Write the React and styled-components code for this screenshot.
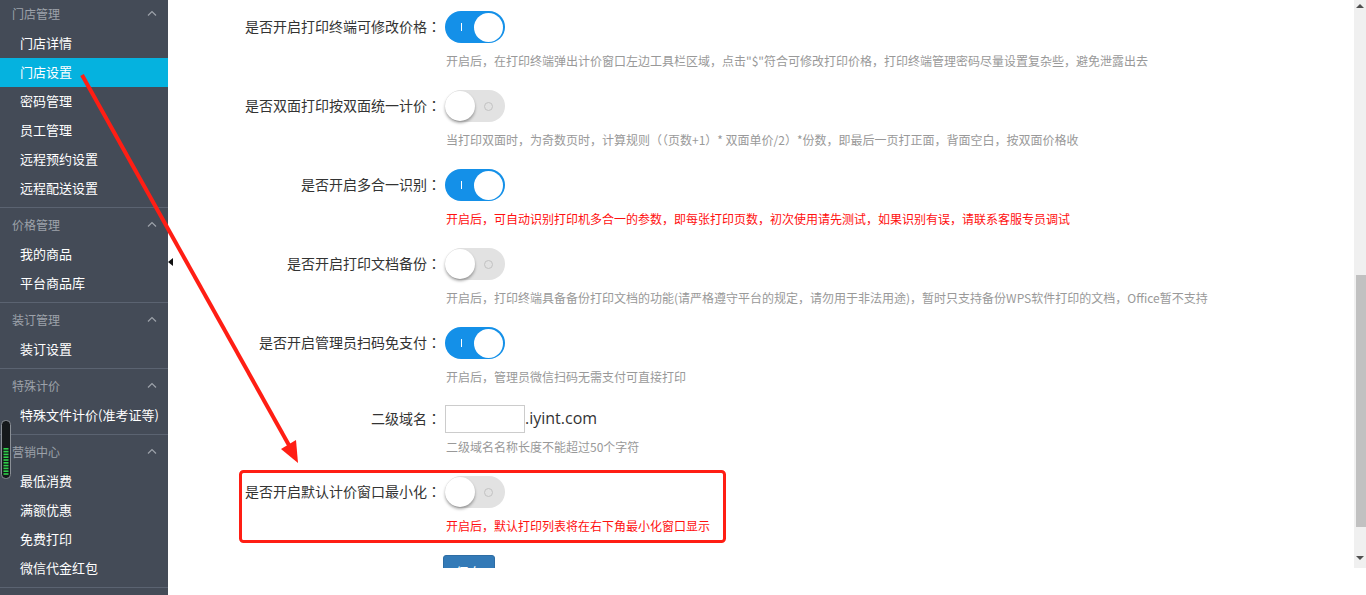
import React from 'react';
import styled, { createGlobalStyle } from 'styled-components';

const GlobalStyle = createGlobalStyle`
  html, body { margin: 0; padding: 0; background: #fff; }
  body { font-family: "Noto Sans CJK SC", "Noto Sans", sans-serif; }
  * { box-sizing: border-box; }
`;

const Page = styled.div`
  display: flex;
  height: 595px;
  position: relative;
  overflow: hidden;
`;

const Sidebar = styled.nav`
  width: 168px;
  flex: none;
  background: #444b57;
  overflow: hidden;
`;

const SideList = styled.div`
  margin-top: -3px;
`;

const SideGroup = styled.div`
  padding-bottom: 4px;
  border-bottom: 1px solid #5b6371;
`;

const GroupHeader = styled.div`
  height: 32px;
  display: flex;
  align-items: center;
  justify-content: space-between;
  padding: 0 11px 0 12px;
  font-size: 12px;
  color: #9da2aa;
`;

const SideItem = styled.div`
  height: 29px;
  line-height: 27px;
  padding-left: 20px;
  font-size: 13px;
  color: #fff;
  white-space: nowrap;
  background: ${p => (p.$active ? '#05b2df' : 'transparent')};
`;

const Main = styled.div`
  flex: 1;
  display: flex;
  flex-direction: column;
  background: #fff;
`;

const Frame = styled.div`
  height: 568px;
  display: flex;
  overflow: hidden;
`;

const Content = styled.div`
  flex: 1;
  padding-top: 11px;
  overflow: hidden;
`;

const FormGroup = styled.div`
  margin-top: ${p => p.$gap ?? 19}px;
  &:first-child { margin-top: 0; }
`;

const Row = styled.div`
  display: grid;
  grid-template-columns: 273px auto;
  column-gap: 4px;
  align-items: center;
  height: 32px;
`;

const Label = styled.label`
  text-align: right;
  font-size: 14px;
  color: #333;
  line-height: 32px;
  white-space: nowrap;
  margin-top: -3px;
`;

const Colon = styled.span`
  font-family: "Noto Sans CJK TC", "Noto Sans CJK SC", sans-serif;
`;

const Desc = styled.div`
  margin-top: ${p => p.$mt ?? 8}px;
  margin-left: 278px;
  font-size: 12px;
  line-height: 20px;
  color: ${p => (p.$red ? '#ff1010' : '#999')};
  white-space: nowrap;
`;

const Switch = styled.span`
  width: 60px;
  height: 32px;
  border-radius: 16px;
  display: flex;
  align-items: center;
  background: ${p => (p.$on ? '#1490e8' : '#e2e2e2')};
`;

const Knob = styled.span`
  width: ${p => (p.$on ? 29 : 30)}px;
  height: ${p => (p.$on ? 29 : 30)}px;
  border-radius: 50%;
  background: #fff;
  margin-left: ${p => (p.$on ? 'auto' : '0')};
  margin-right: ${p => (p.$on ? '2px' : '0')};
  box-shadow: ${p => (p.$on ? 'none' : '0 2px 3px rgba(0,0,0,0.35)')};
`;

const OnMark = styled.span`
  width: 1px;
  height: 8px;
  background: #fff;
  margin-left: 16px;
`;

const OffMark = styled.span`
  width: 9px;
  height: 9px;
  border: 1px solid #c2c2c2;
  border-radius: 50%;
  margin-left: auto;
  margin-right: 12px;
`;

const Toggle = ({ on }) => (
  <Switch $on={on}>
    {on ? <OnMark /> : null}
    <Knob $on={on} />
    {on ? null : <OffMark />}
  </Switch>
);

const DomainField = styled.div`
  display: flex;
  align-items: center;
`;

const TextInput = styled.input`
  width: 80px;
  height: 28px;
  border: 1px solid #ccc;
  padding: 0 4px;
  font-size: 14px;
  outline: none;
`;

const Suffix = styled.span`
  font-size: 16px;
  color: #333;
  font-family: "Open Sans", "Noto Sans", sans-serif;
  margin-top: -3px;
`;

const ButtonRow = styled.div`
  margin-top: 19px;
  padding-left: 275px;
`;

const SaveButton = styled.button`
  height: 34px;
  padding: 0 11px;
  background: #337ab7;
  border: 1px solid #2e6da4;
  border-radius: 3px;
  color: #fff;
  font-size: 14px;
  font-family: "Noto Sans CJK SC", sans-serif;
`;

const ScrollTrack = styled.div`
  width: 12px;
  flex: none;
  background: #f0f0f0;
  display: flex;
  flex-direction: column;
  align-items: center;
`;

const ArrowBox = styled.div`
  height: ${p => p.$h}px;
  width: 100%;
  display: flex;
  align-items: center;
  justify-content: center;
`;

const Tri = styled.span`
  width: 0;
  height: 0;
  border-left: 4px solid transparent;
  border-right: 4px solid transparent;
  ${p => (p.$up ? 'border-bottom: 4px solid #505050;' : 'border-top: 4px solid #505050;')}
`;

const Thumb = styled.div`
  margin-top: 263px;
  height: 252px;
  width: 10px;
  margin-left: 2px;
  background: #c1c1c1;
`;

const Spacer = styled.div`
  flex: 1;
`;

const CollapseHandle = styled.span`
  position: absolute;
  left: 168px;
  top: 258px;
  width: 0;
  height: 0;
  border-top: 4px solid transparent;
  border-bottom: 4px solid transparent;
  border-right: 5px solid #111;
`;

const Overlay = styled.svg`
  position: absolute;
  left: 0;
  top: 0;
  pointer-events: none;
`;

const Meter = styled.svg`
  position: absolute;
  left: 1px;
  top: 420px;
`;

const Chevron = () => (
  <svg width="10" height="6" viewBox="0 0 10 6">
    <polyline points="1,5.5 5,1.5 9,5.5" fill="none" stroke="#9da2aa" strokeWidth="1.2" />
  </svg>
);

const nav = [
  { title: '门店管理', items: ['门店详情', '门店设置', '密码管理', '员工管理', '远程预约设置', '远程配送设置'], active: 1 },
  { title: '价格管理', items: ['我的商品', '平台商品库'] },
  { title: '装订管理', items: ['装订设置'] },
  { title: '特殊计价', items: ['特殊文件计价(准考证等)'] },
  { title: '营销中心', items: ['最低消费', '满额优惠', '免费打印', '微信代金红包'] },
];

const switches = [
  { label: '是否开启打印终端可修改价格', on: true, desc: '开启后，在打印终端弹出计价窗口左边工具栏区域，点击"$"符合可修改打印价格，打印终端管理密码尽量设置复杂些，避免泄露出去' },
  { label: '是否双面打印按双面统一计价', on: false, desc: '当打印双面时，为奇数页时，计算规则（（页数+1）* 双面单价/2）*份数，即最后一页打正面，背面空白，按双面价格收' },
  { label: '是否开启多合一识别', on: true, red: true, desc: '开启后，可自动识别打印机多合一的参数，即每张打印页数，初次使用请先测试，如果识别有误，请联系客服专员调试' },
  { label: '是否开启打印文档备份', on: false, desc: '开启后，打印终端具备备份打印文档的功能(请严格遵守平台的规定，请勿用于非法用途)，暂时只支持备份WPS软件打印的文档，Office暂不支持' },
  { label: '是否开启管理员扫码免支付', on: true, desc: '开启后，管理员微信扫码无需支付可直接打印' },
];

export default function App() {
  return (
    <>
      <GlobalStyle />
      <Page>
        <Sidebar>
          <SideList>
            {nav.map(g => (
              <SideGroup key={g.title}>
                <GroupHeader>
                  <span>{g.title}</span>
                  <Chevron />
                </GroupHeader>
                {g.items.map((it, i) => (
                  <SideItem key={it} $active={g.active === i}>{it}</SideItem>
                ))}
              </SideGroup>
            ))}
          </SideList>
        </Sidebar>
        <Main>
          <Frame>
            <Content>
              {switches.map(s => (
                <FormGroup key={s.label}>
                  <Row>
                    <Label>{s.label}<Colon>：</Colon></Label>
                    <Toggle on={s.on} />
                  </Row>
                  <Desc $red={s.red}>{s.desc}</Desc>
                </FormGroup>
              ))}
              <FormGroup $gap={16}>
                <Row>
                  <Label>二级域名<Colon>：</Colon></Label>
                  <DomainField>
                    <TextInput type="text" />
                    <Suffix>.iyint.com</Suffix>
                  </DomainField>
                </Row>
                <Desc $mt={2}>二级域名名称长度不能超过50个字符</Desc>
              </FormGroup>
              <FormGroup $gap={19}>
                <Row>
                  <Label>是否开启默认计价窗口最小化<Colon>：</Colon></Label>
                  <Toggle on={false} />
                </Row>
                <Desc $red>开启后，默认打印列表将在右下角最小化窗口显示</Desc>
              </FormGroup>
              <ButtonRow>
                <SaveButton type="button">保存</SaveButton>
              </ButtonRow>
            </Content>
            <ScrollTrack>
              <ArrowBox $h={12}><Tri $up /></ArrowBox>
              <Thumb />
              <Spacer />
              <ArrowBox $h={20}><Tri /></ArrowBox>
            </ScrollTrack>
          </Frame>
        </Main>
        <CollapseHandle />
        <Meter width="11" height="60" viewBox="0 0 11 60">
          <rect x="0.5" y="0.5" width="9" height="58" rx="4" fill="#15181b" stroke="#8a8f96" />
          {Array.from({ length: 10 }).map((_, i) => (
            <rect key={i} x="2.5" y={28 + i * 2.8} width="5" height="1.6" fill="#2fd14a" />
          ))}
        </Meter>
        <Overlay width="1366" height="595" viewBox="0 0 1366 595">
          <rect x="240.5" y="471.5" width="484" height="70" rx="3" fill="none" stroke="#ff1e14" strokeWidth="3" />
          <line x1="82" y1="75" x2="290" y2="447" stroke="#ff1e14" strokeWidth="4" />
          <polygon points="298,463 281,449 296,440" fill="#ff1e14" />
        </Overlay>
      </Page>
    </>
  );
}
